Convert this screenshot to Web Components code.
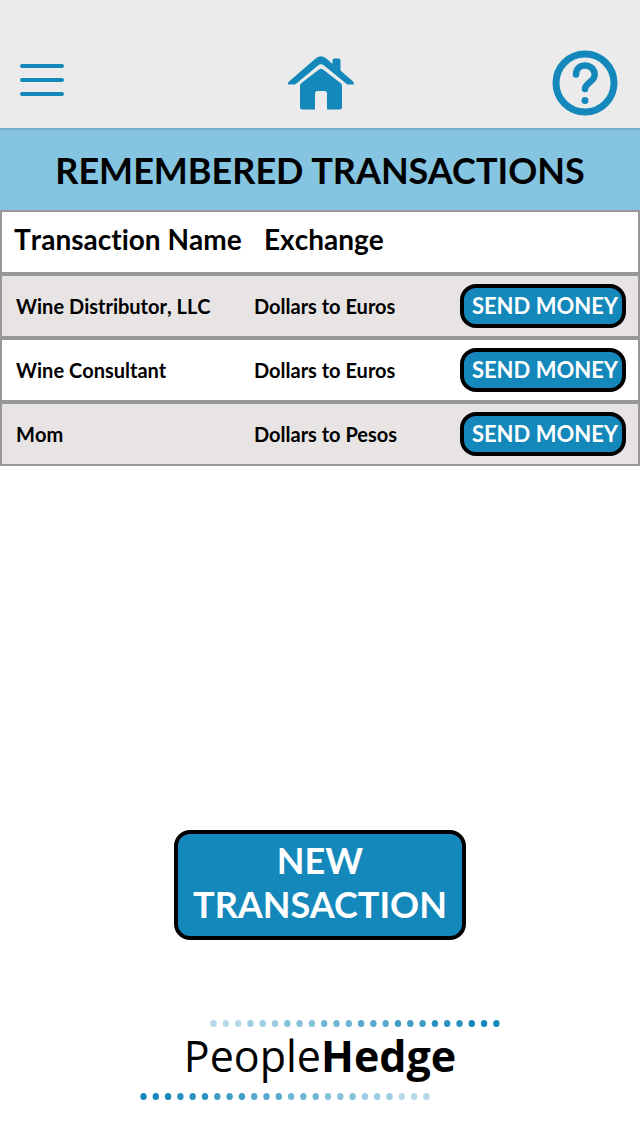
<!DOCTYPE html>
<html lang="en">
<head>
<meta charset="utf-8">
<meta name="viewport" content="width=device-width, initial-scale=1">
<title>PeopleHedge – Remembered Transactions</title>
<style>
  body {
    margin: 0;
    background: #fff;
    color: #000;
    font-family: Lato, "Liberation Sans", sans-serif;
    font-weight: 700;
    font-variant-ligatures: none;
  }
</style>
</head>
<body>
<ph-app>
  <ph-header slot="header"></ph-header>
  <ph-banner slot="header">REMEMBERED TRANSACTIONS</ph-banner>
  <ph-transactions></ph-transactions>
  <ph-button slot="action" size="large">NEW TRANSACTION</ph-button>
  <ph-logo slot="footer"></ph-logo>
</ph-app>

<script>
function define(name, html, setup) {
  const template = document.createElement('template');
  template.innerHTML = html;
  customElements.define(name, class extends HTMLElement {
    constructor() {
      super();
      this.attachShadow({ mode: 'open' }).append(template.content.cloneNode(true));
      if (setup) setup(this.shadowRoot);
    }
  });
}

define('ph-app', `
  <style>
    :host { display: flex; flex-direction: column; min-height: 100vh; --blue: #1488bb; }
    main { flex: 1; display: flex; flex-direction: column; justify-content: space-between; }
    .action { display: flex; justify-content: center; padding: 48px 16px 0; }
    footer { display: flex; justify-content: center; padding: 80px 16px 36px; }
  </style>
  <slot name="header"></slot>
  <main>
    <slot></slot>
    <div class="action"><slot name="action"></slot></div>
  </main>
  <footer><slot name="footer"></slot></footer>
`);

define('ph-header', `
  <style>
    :host { display: block; background: #ebebeb; border-bottom: 2px solid #74aecd; }
    nav {
      box-sizing: border-box; height: 128px; padding: 38px 20px 0;
      display: grid; grid-template-columns: 1fr auto 1fr; align-items: center;
    }
    button, a { display: block; padding: 0; border: 0; background: none; color: var(--blue); cursor: pointer; }
    .help { justify-self: end; }
    .menu { justify-self: start; padding-bottom: 6px; }
    svg { display: block; }
  </style>
  <nav aria-label="Main">
    <button class="menu" type="button" aria-label="Menu">
      <svg width="44" height="32" viewBox="0 0 44 32" fill="currentColor">
        <rect width="44" height="4" rx="2"/><rect y="14" width="44" height="4" rx="2"/><rect y="28" width="44" height="4" rx="2"/>
      </svg>
    </button>
    <a href="#home" aria-label="Home">
      <svg width="68" height="54" viewBox="-2 0 68 54" fill="currentColor">
        <path d="M1 28.500Q-1.500 28 1 25.500L27 3Q33 -2.500 39 3L44.500 8V4.500Q44.500 2.500 46.500 2.500H50.500Q52.500 2.500 52.500 4.500V14.500L65 25.500Q67 28 65 28.500H60.500Q59 28.500 57.500 27L36 9.500Q33 7 30 9.500L9 27Q7.500 28.500 6 28.500Z"/>
        <path d="M12 30Q12 28 13.500 27L31 13.500Q33 12 35 13.500L52.500 27Q54 28 54 30V51Q54 53.500 51.500 53.500H39V37.500Q39 35 36.500 35H29.500Q27 35 27 37.500V53.500H14.500Q12 53.500 12 51Z"/>
      </svg>
    </a>
    <button class="help" type="button" aria-label="Help">
      <svg width="70" height="66" viewBox="0 0 70 66" fill="none" stroke="currentColor">
        <circle cx="35" cy="33" r="29" stroke-width="7"/>
        <path d="M26 24.500C26 19 30 15.500 35.200 15.500S44.700 19.500 44.700 24.800C44.700 32 35 32.500 35 39" stroke-width="6.500" stroke-linecap="round"/>
        <circle cx="35" cy="50.500" r="3.500" fill="currentColor" stroke="none"/>
      </svg>
    </button>
  </nav>
`);

define('ph-banner', `
  <style>
    :host { display: block; background: #85c5e1; }
    h1 { margin: 0; padding: 18px 16px; font-size: 36px; line-height: 44px; font-weight: inherit; text-align: center; }
  </style>
  <h1><slot></slot></h1>
`);

define('ph-button', `
  <style>
    :host { display: block; }
    button {
      box-sizing: border-box; width: 100%; height: 44px; padding: 0 0 0 4px;
      border: 4px solid #000; border-radius: 16px;
      background: var(--blue); color: #fff;
      font: inherit; font-size: 22px; line-height: 28px; white-space: nowrap; cursor: pointer;
    }
    :host([size="large"]) { width: 292px; }
    :host([size="large"]) button {
      height: auto; padding: 4px 8px 10px; font-size: 36px; line-height: 44px; white-space: normal;
    }
  </style>
  <button type="button"><slot></slot></button>
`);

define('ph-transactions', `
  <style>
    :host { display: block; }
    table { width: 100%; border-spacing: 0; table-layout: fixed; border: solid #979797; border-width: 0 2px; }
    .name { width: 248px; }
    .send { width: 178px; }
    th, td {
      box-sizing: border-box; height: 64px; padding: 0; text-align: left; vertical-align: middle;
      border: solid #979797; border-width: 2px 0; font-size: 20px; line-height: 24px; font-weight: inherit;
    }
    th { font-kerning: none; }
    thead th { font-size: 28px; line-height: 32px; padding: 0 0 6px 14px; white-space: nowrap; }
    thead th:first-child { padding-left: 12px; }
    tbody th { padding-left: 14px; }
    td { padding-left: 4px; }
    td:last-child { padding: 0 12px 0 0; }
    tbody tr:nth-child(odd) { background: #e7e4e3; }
  </style>
  <table>
    <colgroup><col class="name"><col><col class="send"></colgroup>
    <thead><tr><th scope="col">Transaction Name</th><th scope="col">Exchange</th><td></td></tr></thead>
    <tbody></tbody>
  </table>
`, root => {
  const rows = [
    ['Wine Distributor, LLC', 'Dollars to Euros'],
    ['Wine Consultant', 'Dollars to Euros'],
    ['Mom', 'Dollars to Pesos'],
  ];
  root.querySelector('tbody').innerHTML = rows.map(([name, exchange]) =>
    `<tr><th scope="row">${name}</th><td>${exchange}</td><td><ph-button>SEND MONEY</ph-button></td></tr>`).join('');
});

define('ph-logo', `
  <style>
    :host { display: flex; flex-direction: column; width: 360px; }
    svg { display: block; }
    .top { align-self: flex-end; }
    p {
      margin: 0; padding-bottom: 8px; text-align: center; font-family: "Open Sans", "Noto Sans", sans-serif;
      font-size: 43px; line-height: 58px; font-weight: 400;
    }
    b { font-weight: 700; }
  </style>
  <svg class="top" width="290" height="7" aria-hidden="true"></svg>
  <p>People<b>Hedge</b></p>
  <svg class="bottom" width="290" height="7" aria-hidden="true"></svg>
`, root => {
  const shades = ['#b5d9e9', '#9dcde2', '#85c1db', '#6fb5d4', '#58a9cd', '#419dc5', '#2a92c0', '#1488bb'];
  const dots = colours => colours.map((colour, i) =>
    `<ellipse cx="${3.5 + i * 12.3}" cy="3.5" rx="3.2" ry="3.5" fill="${colour}"/>`).join('');
  const ramp = shades.flatMap(shade => [shade, shade, shade]);
  root.querySelector('.top').innerHTML = dots(ramp);
  root.querySelector('.bottom').innerHTML = dots([...ramp].reverse());
});
</script>
</body>
</html>
